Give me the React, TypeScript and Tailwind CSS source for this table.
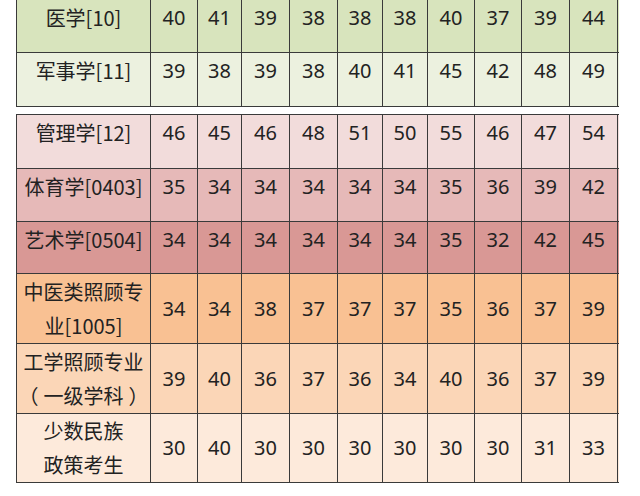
import type { ReactNode } from "react";

const widths = [
  "w-[134px]",
  "w-[47px]",
  "w-[44px]",
  "w-[48px]",
  "w-[48px]",
  "w-[45px]",
  "w-[45px]",
  "w-[47px]",
  "w-[47px]",
  "w-[48px]",
  "w-[48px]",
];

interface Row {
  key: string;
  label: ReactNode[];
  values: number[];
  bg: string;
  h: string;
  tall?: boolean;
}

const topRows: Row[] = [
  { key: "med", label: ["医学[10]"], values: [40, 41, 39, 38, 38, 38, 40, 37, 39, 44], bg: "bg-[#d8e4bd]", h: "h-[53px]" },
  { key: "mil", label: ["军事学[11]"], values: [39, 38, 39, 38, 40, 41, 45, 42, 48, 49], bg: "bg-[#ecf1df]", h: "h-[54px]" },
];

const bottomRows: Row[] = [
  { key: "mgmt", label: ["管理学[12]"], values: [46, 45, 46, 48, 51, 50, 55, 46, 47, 54], bg: "bg-[#f2dcdb]", h: "h-[54px]" },
  { key: "pe", label: ["体育学[0403]"], values: [35, 34, 34, 34, 34, 34, 35, 36, 39, 42], bg: "bg-[#e6b9b8]", h: "h-[53px]" },
  { key: "art", label: ["艺术学[0504]"], values: [34, 34, 34, 34, 34, 34, 35, 32, 42, 45], bg: "bg-[#d99895]", h: "h-[52px]" },
  { key: "tcm", label: ["中医类照顾专", "业[1005]"], values: [34, 34, 38, 37, 37, 37, 35, 36, 37, 39], bg: "bg-[#f9c193]", h: "h-[70px]", tall: true },
  {
    key: "eng",
    label: [
      "工学照顾专业",
      <>
        （<span className="mx-[5px]">一级学科</span>）
      </>,
    ],
    values: [39, 40, 36, 37, 36, 34, 40, 36, 37, 39],
    bg: "bg-[#fbd6b7]",
    h: "h-[70px]",
    tall: true,
  },
  { key: "min", label: ["少数民族", "政策考生"], values: [30, 40, 30, 30, 30, 30, 30, 30, 31, 33], bg: "bg-[#fdeadb]", h: "h-[69px]", tall: true },
];

const TableRow = ({ row }: { row: Row }) => {
  const align = row.tall ? "items-center" : "items-start pt-[6px]";
  return (
    <div className={`flex border-b-[1.5px] border-[#3a3a3a] ${row.bg} ${row.h}`}>
      <div
        className={`${widths[0]} flex flex-col ${row.tall ? "justify-center leading-[34px]" : "justify-start pt-[6px] leading-[24px]"} border-r-[1.5px] border-[#3a3a3a] text-center`}
        style={{ fontFamily: '"Noto Sans CJK SC", "Noto Sans", sans-serif' }}
      >
        {row.label.map((l, i) => (
          <span key={i}>{l}</span>
        ))}
      </div>
      {row.values.map((v, i) => (
        <div
          key={i}
          className={`${widths[i + 1]} flex justify-center ${align} border-r-[1.5px] border-[#3a3a3a] leading-[24px]`}
        >
          {v}
        </div>
      ))}
    </div>
  );
};

export default function App() {
  return (
    <div
      className="w-[640px] h-[496px] bg-white overflow-hidden text-[20px] text-[#222]"
      style={{ fontFamily: '"Noto Sans", "Noto Sans CJK SC", sans-serif' }}
    >
      <div className="ml-[16px] w-[603px] border-l-[1.5px] border-[#3a3a3a]">
        {topRows.map((r) => (
          <TableRow key={r.key} row={r} />
        ))}
      </div>
      <div className="ml-[16px] mt-[7px] w-[603px] border-l-[1.5px] border-t-[1.5px] border-[#3a3a3a]">
        {bottomRows.map((r) => (
          <TableRow key={r.key} row={r} />
        ))}
      </div>
    </div>
  );
}
